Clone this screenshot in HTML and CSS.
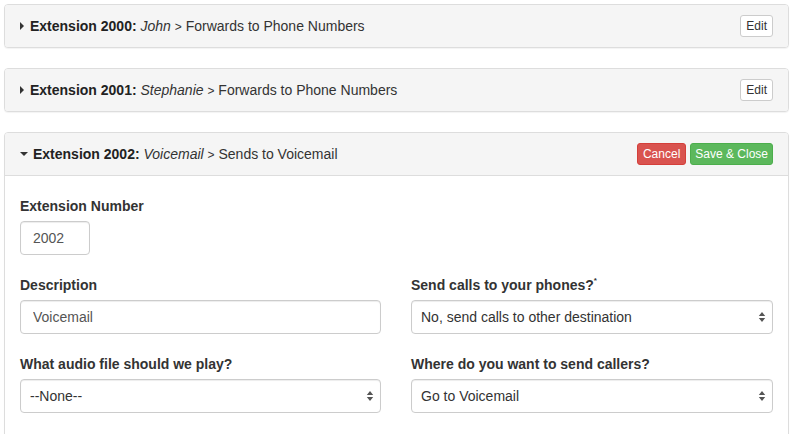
FILE: index.html
```html
<!DOCTYPE html>
<html>
<head>
<meta charset="utf-8">
<link rel="stylesheet" href="styles.css">
</head>
<body>
<div class="page">
  <div class="panel">
    <div class="panel-heading">
      <div class="title"><span class="caret-right"></span><b>Extension 2000:</b> <i>John</i> <span class="chev">&gt;</span> Forwards to Phone Numbers</div>
      <button class="btn btn-default">Edit</button>
    </div>
  </div>
  <div class="panel">
    <div class="panel-heading">
      <div class="title"><span class="caret-right"></span><b>Extension 2001:</b> <i>Stephanie</i> <span class="chev">&gt;</span> Forwards to Phone Numbers</div>
      <button class="btn btn-default">Edit</button>
    </div>
  </div>
  <div class="panel open">
    <div class="panel-heading">
      <div class="title"><span class="caret-down"></span><b>Extension 2002:</b> <i>Voicemail</i> <span class="chev">&gt;</span> Sends to Voicemail</div>
      <div class="actions">
        <button class="btn btn-danger">Cancel</button>
        <button class="btn btn-success">Save &amp; Close</button>
      </div>
    </div>
    <div class="panel-body">
      <div class="form-group">
        <label>Extension Number</label>
        <input class="form-control short" type="text" value="2002">
      </div>
      <div class="row">
        <div class="form-group">
          <label>Description</label>
          <input class="form-control" type="text" value="Voicemail">
        </div>
        <div class="form-group">
          <label>Send calls to your phones?<sup>*</sup></label>
          <div class="select-wrap">
            <select class="form-control select"><option>No, send calls to other destination</option></select>
            <svg class="arrows" width="8" height="12" viewBox="0 0 8 12"><path d="M4 1 L7.2 5 H0.8 Z M4 11 L7.2 7 H0.8 Z" fill="#555"/></svg>
          </div>
        </div>
      </div>
      <div class="row">
        <div class="form-group">
          <label>What audio file should we play?</label>
          <div class="select-wrap">
            <select class="form-control select"><option>--None--</option></select>
            <svg class="arrows" width="8" height="12" viewBox="0 0 8 12"><path d="M4 1 L7.2 5 H0.8 Z M4 11 L7.2 7 H0.8 Z" fill="#555"/></svg>
          </div>
        </div>
        <div class="form-group">
          <label>Where do you want to send callers?</label>
          <div class="select-wrap">
            <select class="form-control select"><option>Go to Voicemail</option></select>
            <svg class="arrows" width="8" height="12" viewBox="0 0 8 12"><path d="M4 1 L7.2 5 H0.8 Z M4 11 L7.2 7 H0.8 Z" fill="#555"/></svg>
          </div>
        </div>
      </div>
    </div>
  </div>
</div>
</body>
</html>
```

FILE: styles.css
```css
* { box-sizing: border-box; }
html, body { margin: 0; padding: 0; background: #fff; }
body {
  font-family: "Liberation Sans", Arial, Helvetica, sans-serif;
  font-size: 14px;
  color: #333;
  overflow: hidden;
  height: 434px;
}
.page {
  padding: 4px 6px 0 4px;
}
.panel {
  border: 1px solid #ddd;
  border-radius: 4px;
  background: #fff;
  box-shadow: 0 1px 1px rgba(0,0,0,0.05);
  margin-bottom: 20px;
}
.panel.open { margin-bottom: 0; }
.panel-heading {
  height: 42px;
  background: #f5f5f5;
  border-radius: 3px;
  display: flex;
  align-items: center;
  justify-content: space-between;
  padding: 0 15px;
}
.panel.open .panel-heading {
  border-bottom: 1px solid #ddd;
  height: 43px;
  border-radius: 3px 3px 0 0;
}
.title {
  display: block;
  white-space: nowrap;
  color: #333;
  line-height: 20px;
}
.title b { font-weight: bold; color: #222; }
.chev { font-size: 12px; color: #333; }
.caret-right {
  display: inline-block;
  vertical-align: middle;
  width: 0; height: 0;
  border-top: 4px solid transparent;
  border-bottom: 4px solid transparent;
  border-left: 4px solid #333;
  margin: -2px 6px 0 0;
}
.caret-down {
  display: inline-block;
  vertical-align: middle;
  width: 0; height: 0;
  border-left: 4px solid transparent;
  border-right: 4px solid transparent;
  border-top: 4px solid #333;
  margin: -2px 5px 0 0;
}
.btn {
  font-family: "Liberation Sans", Arial, sans-serif;
  font-size: 12px;
  line-height: 16px;
  height: 22px;
  padding: 2px 5px;
  border-radius: 3px;
  border: 1px solid #ccc;
  background: #fff;
  color: #333;
  cursor: pointer;
}
.actions { display: flex; gap: 4px; }
.btn-danger { background: #d9534f; border-color: #d43f3a; color: #fff; padding: 2px 5px; }
.btn-success { background: #5cb85c; border-color: #4cae4c; color: #fff; padding: 2px 4px; }
.panel-body {
  padding: 20px 15px 40px 15px;
}
.form-group { margin-bottom: 20px; display: flex; flex-direction: column; }
label {
  font-weight: bold;
  line-height: 20px;
  margin-bottom: 5px;
  color: #333;
}
label sup { font-size: 8px; line-height: 0; position: relative; top: -1px; }
.row {
  display: grid;
  grid-template-columns: 361px 1fr;
  column-gap: 30px;
}
.form-control {
  height: 34px;
  width: 100%;
  border: 1px solid #ccc;
  border-radius: 4px;
  padding: 6px 12px;
  font-family: "Liberation Sans", Arial, sans-serif;
  font-size: 14px;
  color: #555;
  background: #fff;
  box-shadow: inset 0 1px 1px rgba(0,0,0,0.075);
}
.form-control.short { width: 70px; }
.select-wrap { position: relative; }
.select {
  -webkit-appearance: none;
  appearance: none;
  padding: 6px 9px;
  color: #333;
}
.arrows {
  position: absolute;
  right: 7px;
  top: 11px;
  pointer-events: none;
}
```
